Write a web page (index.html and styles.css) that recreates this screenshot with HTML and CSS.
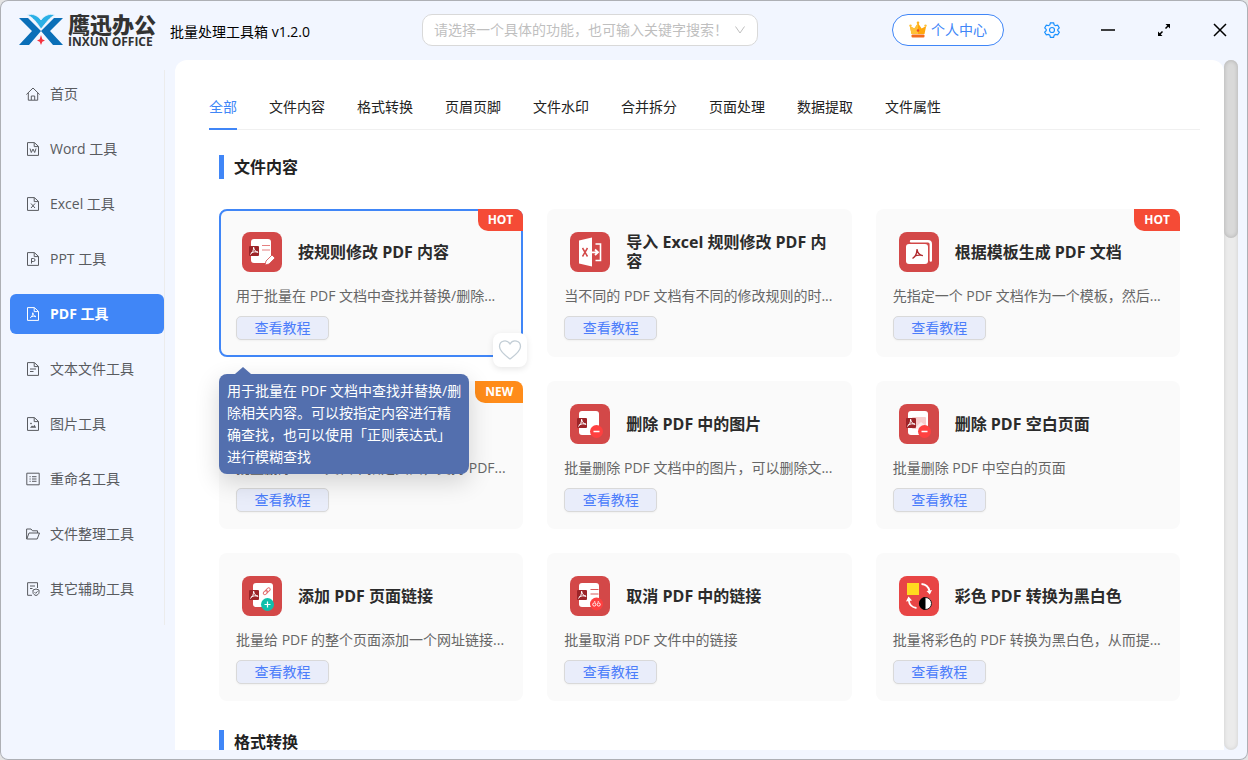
FILE: index.html
```html
<!DOCTYPE html>
<html lang="zh-CN">
<head>
  <meta charset="UTF-8">
  <meta name="viewport" content="width=device-width, initial-scale=1.0">
  <title>批量处理工具箱</title>
  <link rel="stylesheet" href="styles.css">
</head>
<body>

  <!-- Iconos compartidos -->
  <svg class="sprite" aria-hidden="true">
    <symbol id="file" viewBox="0 0 14 14">
      <path d="M1.5.6H8.4L12.5 4.400V13.4H1.5ZM8.2.8V4.600H12.300" />
    </symbol>
    <symbol id="pdf-mark" viewBox="0 0 10 10">
      <path d="M4.6 1.6C4.5 4.8 3.6 7 1.5 8.2M4.7 1.6C5 4 6.3 5.6 8.8 6.3M2.6 6.7C4.4 5.8 6.3 5.6 8.6 6" fill="none" stroke="currentColor" stroke-linecap="round" />
    </symbol>
    <symbol id="pdf-badge" viewBox="0 0 10 10">
      <rect width="10" height="10" rx="1" fill="#9c2428" />
      <use href="#pdf-mark" color="#fff" />
    </symbol>
    <symbol id="minus-dot" viewBox="0 0 14 14">
      <circle cx="7" cy="7" r="6.5" fill="#ff4040" />
      <path d="M4 7H10" stroke="#fff" stroke-width="1.4" />
    </symbol>
  </svg>

  <div class="app">
    <header class="topbar">
      <div class="logo">
        <svg class="logo-mark" viewBox="0 0 44 32">
          <path d="M0 4H9L22 17L10 31H0L13 17Z" fill="#0a6fb8" />
          <path d="M44 4H35L22 17L34 31H44L31 17Z" fill="#0a6fb8" />
          <path d="M8 1C14-1 19 2 22 6C25 2 30-1 36 1C31 3 27 9 22 15C18 9 14 3 8 1Z" fill="#2bb0e6" stroke="#f2f6ff" stroke-width=".8" />
          <path d="M22 21L23.300 25.200L26 26.500L23.300 27.800L22 31L20.700 27.800L18 26.500L20.700 25.200Z" fill="#f5333f" />
        </svg>
        <div class="logo-text">
          <strong>鹰迅办公</strong>
          <span>INXUN OFFICE</span>
        </div>
      </div>
      <h1>批量处理工具箱 v1.2.0</h1>

      <div class="search">
        <div class="search-box">
          <input type="text" placeholder="请选择一个具体的功能，也可输入关键字搜索！" aria-label="搜索功能">
          <svg class="chevron" viewBox="0 0 12 12"><path d="M1.5 2.5L6 9L10.500 2.500" /></svg>
        </div>
      </div>

      <button class="user" type="button">
        <svg class="crown" viewBox="0 0 18 18">
          <path d="M2.500 13L.8 5L5.400 7.500L9 2L12.600 7.500L17.200 5L15.500 13Z" fill="#ffa70a" />
          <path d="M2.500 13L.8 5L5.400 7.500L9 2V13Z" fill="#ffc037" />
          <circle cx="9" cy="1.800" r="1.300" fill="#ffb21c" />
          <circle cx="1.500" cy="4.600" r="1.200" fill="#ffc037" />
          <circle cx="16.500" cy="4.600" r="1.200" fill="#ffc037" />
          <circle cx="9" cy="9.500" r="1.200" fill="#e9452c" />
          <rect x="2.500" y="13.500" width="13" height="3" rx="1" fill="#f36b1c" />
        </svg>
        个人中心
      </button>

      <div class="window-buttons">
        <button class="gear" type="button" aria-label="设置">
          <svg viewBox="0 0 16 16">
            <path d="M6.400.8H9.600L10.200 2.900L11.600 3.700L13.700 3.200L15.300 5.900L13.800 7.400V8.700L15.300 10.200L13.700 12.900L11.600 12.400L10.200 13.200L9.600 15.300H6.400L5.800 13.200L4.400 12.400L2.300 12.900L.7 10.200L2.200 8.700V7.400L.7 5.900L2.300 3.200L4.400 3.700L5.800 2.900Z" />
            <circle cx="8" cy="8" r="2.500" />
          </svg>
        </button>
        <button type="button" aria-label="最小化">
          <svg viewBox="0 0 16 16"><path d="M1 8H15" /></svg>
        </button>
        <button type="button" aria-label="最大化">
          <svg viewBox="0 0 16 16">
            <path d="M9.500 6.500L13 3M6.500 9.500L3 13" />
            <path d="M9.500 2H14V6.500ZM2 9.500V14H6.500Z" fill="currentColor" stroke="none" />
          </svg>
        </button>
        <button type="button" aria-label="关闭">
          <svg viewBox="0 0 16 16"><path d="M2 2L14 14M14 2L2 14" /></svg>
        </button>
      </div>
    </header>

    <div class="body">
      <nav class="sidebar" aria-label="工具分类">
        <a href="#">
          <svg viewBox="0 0 14 14"><path d="M.4 7.500L7 1L13.600 7.500M2.300 6V13.200H11.700V6M5.300 13V9H8.700V13" /></svg>
          首页
        </a>
        <a href="#">
          <svg viewBox="0 0 14 14"><use href="#file" /><path d="M4 6.500L5.300 10.500L7 7L8.700 10.500L10 6.500" /></svg>
          Word 工具
        </a>
        <a href="#">
          <svg viewBox="0 0 14 14"><use href="#file" /><path d="M5 6.500L9 11M9 6.500L5 11" /></svg>
          Excel 工具
        </a>
        <a href="#">
          <svg viewBox="0 0 14 14"><use href="#file" /><path d="M5.500 11.500V6.500H7.500A1.500 1.500 0 0 1 7.500 9.500H5.500" /></svg>
          PPT 工具
        </a>
        <a href="#" class="active" aria-current="page">
          <svg viewBox="0 0 14 14"><use href="#file" /><path d="M6.800 5.500C6.800 8 6 9.800 4.200 10.800M6.900 6C7.200 8 8.300 9.300 10 9.900M5.200 9.700C6.500 9.200 8 9 9.800 9.300" /></svg>
          PDF 工具
        </a>
        <a href="#">
          <svg viewBox="0 0 14 14"><use href="#file" /><path d="M4 7H10M4 9.500H7.500" /></svg>
          文本文件工具
        </a>
        <a href="#">
          <svg viewBox="0 0 14 14"><use href="#file" /><path d="M4 10.800L6 8.500L7.200 9.500L8.500 7.800L10.200 10.800Z" fill="currentColor" stroke="none" /><circle cx="5" cy="6.500" r=".5" /></svg>
          图片工具
        </a>
        <a href="#">
          <svg viewBox="0 0 14 14"><path d="M.8 1.200H13.200V12.800H.8ZM6 4.700H10.500M6 7H10.500M6 9.300H10.500M3.500 4.700H4.700M3.500 7H4.700M3.500 9.300H4.700" /></svg>
          重命名工具
        </a>
        <a href="#">
          <svg viewBox="0 0 14 14"><path d="M.6 12V2H5L6.500 3.800H11.500V6M.6 12H11.200L13.500 6H3L.8 12" /></svg>
          文件整理工具
        </a>
        <a href="#">
          <svg viewBox="0 0 14 14"><path d="M6 13.300H1.600V.7H11.500V6M4 4H9M4 6.500H6.500M10 7L13 8V10.500C13 12 11.500 13 10 13.500C8.500 13 7 12 7 10.500V8ZM8.600 10.200L9.700 11.300L11.500 9.300" /></svg>
          其它辅助工具
        </a>
      </nav>

      <main class="panel">
        <div class="tabs" role="tablist">
          <button type="button" role="tab" class="active" aria-selected="true">全部</button>
          <button type="button" role="tab">文件内容</button>
          <button type="button" role="tab">格式转换</button>
          <button type="button" role="tab">页眉页脚</button>
          <button type="button" role="tab">文件水印</button>
          <button type="button" role="tab">合并拆分</button>
          <button type="button" role="tab">页面处理</button>
          <button type="button" role="tab">数据提取</button>
          <button type="button" role="tab">文件属性</button>
        </div>

        <section>
          <h2>文件内容</h2>
          <div class="cards">

            <article class="card selected">
              <span class="tag hot">HOT</span>
              <div class="card-head">
                <svg class="tool-icon" viewBox="0 0 40 40">
                  <rect x="9" y="7" width="20" height="24" rx="3" fill="#fff" />
                  <use href="#pdf-badge" x="7" y="14" width="10" height="10" />
                  <path d="M20 13.500H28M20 18H28" stroke="#e58080" stroke-width="1.200" />
                  <path d="M23 33L24 29L30 23L33 26L27 32Z" fill="#fff" stroke="#d34848" stroke-width=".8" />
                </svg>
                <h3>按规则修改 PDF 内容</h3>
              </div>
              <p>用于批量在 PDF 文档中查找并替换/删除...</p>
              <button class="guide" type="button">查看教程</button>
              <button class="fav" type="button" aria-label="收藏">
                <svg viewBox="0 0 24 24"><path d="M12 21C8 18 1.500 13.500 1.500 8.500C1.500 2.500 9 1 12 6C15 1 22.500 2.500 22.500 8.500C22.500 13.500 16 18 12 21Z" /></svg>
              </button>
              <div class="tooltip" role="tooltip">
                用于批量在 PDF 文档中查找并替换/删<br>除相关内容。可以按指定内容进行精<br>确查找，也可以使用「正则表达式」<br>进行模糊查找
              </div>
            </article>

            <article class="card">
              <div class="card-head">
                <svg class="tool-icon" viewBox="0 0 40 40">
                  <path d="M9 8.500L22 5.500V34.500L9 31.500Z" fill="#fff" />
                  <path d="M12.500 16L17.500 24.500M17.500 16L12.500 24.500" stroke="#d34848" stroke-width="1.500" />
                  <path d="M25.500 12H30.500V28.500H25.500" fill="none" stroke="#fff" stroke-width="1.600" />
                  <path d="M22 20.300H27M25 17.500L28 20.300L25 23" fill="none" stroke="#fff" stroke-width="1.800" />
                </svg>
                <h3>导入 Excel 规则修改 PDF 内容</h3>
              </div>
              <p>当不同的 PDF 文档有不同的修改规则的时...</p>
              <button class="guide" type="button">查看教程</button>
            </article>

            <article class="card">
              <span class="tag hot">HOT</span>
              <div class="card-head">
                <svg class="tool-icon" viewBox="0 0 40 40">
                  <path d="M12 9.200H29Q31.800 9.200 31.800 12V28.500" fill="none" stroke="#fff" stroke-width="2.400" stroke-linecap="round" />
                  <rect x="7" y="12" width="22" height="20" rx="3" fill="#fff" />
                  <use href="#pdf-mark" x="12" y="15.500" width="13" height="13" color="#b02a2e" />
                </svg>
                <h3>根据模板生成 PDF 文档</h3>
              </div>
              <p>先指定一个 PDF 文档作为一个模板，然后...</p>
              <button class="guide" type="button">查看教程</button>
            </article>

            <article class="card">
              <span class="tag new">NEW</span>
              <div class="card-head">
                <svg class="tool-icon" viewBox="0 0 40 40">
                  <rect x="9" y="7" width="20" height="24" rx="3" fill="#fff" />
                  <use href="#pdf-badge" x="7" y="14" width="10" height="10" />
                </svg>
                <h3>删除 PDF 页面</h3>
              </div>
              <p>批量删除 PDF 文档中指定页面，支持 PDF...</p>
              <button class="guide" type="button">查看教程</button>
            </article>

            <article class="card">
              <div class="card-head">
                <svg class="tool-icon" viewBox="0 0 40 40">
                  <rect x="9" y="7" width="20" height="24" rx="3" fill="#fff" />
                  <use href="#pdf-badge" x="7" y="14" width="10" height="10" />
                  <use href="#minus-dot" x="19.500" y="20.500" width="14" height="14" />
                </svg>
                <h3>删除 PDF 中的图片</h3>
              </div>
              <p>批量删除 PDF 文档中的图片，可以删除文...</p>
              <button class="guide" type="button">查看教程</button>
            </article>

            <article class="card">
              <div class="card-head">
                <svg class="tool-icon" viewBox="0 0 40 40">
                  <rect x="9" y="7" width="20" height="24" rx="3" fill="#fff" />
                  <rect x="13" y="13" width="14" height="12" rx="1" fill="#f8cccc" />
                  <path d="M17 23L22 18L27 22V25H17Z" fill="#fff" opacity=".6" />
                  <use href="#pdf-badge" x="7" y="14" width="10" height="10" />
                  <use href="#minus-dot" x="18.500" y="20.500" width="14" height="14" />
                </svg>
                <h3>删除 PDF 空白页面</h3>
              </div>
              <p>批量删除 PDF 中空白的页面</p>
              <button class="guide" type="button">查看教程</button>
            </article>

            <article class="card">
              <div class="card-head">
                <svg class="tool-icon" viewBox="0 0 40 40">
                  <rect x="11" y="7" width="20" height="24" rx="3" fill="#fff" />
                  <use href="#pdf-badge" x="7" y="14" width="10" height="10" />
                  <g fill="none" stroke="#e26a6a">
                    <rect x="21" y="15" width="5" height="3" rx="1.500" transform="rotate(-45 23.500 16.500)" />
                    <rect x="23.500" y="12.500" width="5" height="3" rx="1.500" transform="rotate(-45 26 14)" />
                  </g>
                  <circle cx="25.500" cy="28.500" r="6.500" fill="#0fbfab" />
                  <path d="M22.500 28.500H28.500M25.500 25.500V31.500" stroke="#fff" stroke-width="1.200" />
                </svg>
                <h3>添加 PDF 页面链接</h3>
              </div>
              <p>批量给 PDF 的整个页面添加一个网址链接...</p>
              <button class="guide" type="button">查看教程</button>
            </article>

            <article class="card">
              <div class="card-head">
                <svg class="tool-icon" viewBox="0 0 40 40">
                  <rect x="9" y="7" width="20" height="24" rx="3" fill="#fff" />
                  <use href="#pdf-badge" x="7" y="14" width="10" height="10" />
                  <path d="M20.500 13.500H28.500M20.500 18H28.500" stroke="#d95b5b" stroke-width="1.200" />
                  <circle cx="26.500" cy="28" r="6.500" fill="#ff4040" />
                  <g fill="none" stroke="#fff" stroke-width=".9">
                    <circle cx="24.300" cy="28.500" r="1.600" />
                    <circle cx="28.700" cy="28.500" r="1.600" />
                    <path d="M24.500 25L25.200 26.400M28.500 25L27.800 26.400" />
                  </g>
                </svg>
                <h3>取消 PDF 中的链接</h3>
              </div>
              <p>批量取消 PDF 文件中的链接</p>
              <button class="guide" type="button">查看教程</button>
            </article>

            <article class="card">
              <div class="card-head">
                <svg class="tool-icon bright" viewBox="0 0 40 40">
                  <rect x="8" y="7" width="12" height="12" fill="#ffd91f" />
                  <path d="M22.500 8Q29 8.500 30.500 15M17.500 32Q10.500 31 9.800 24.500" fill="none" stroke="#fff" stroke-width="1.800" />
                  <path d="M27.500 15L33 14L30.800 18.500ZM7 25.500L9.500 20.500L13 24.500Z" fill="#fff" />
                  <circle cx="26.500" cy="27.500" r="6" fill="#fff" stroke="#111" stroke-width=".9" />
                  <path d="M26.500 21A6.500 6.500 0 0 0 26.500 34Z" fill="#000" />
                </svg>
                <h3>彩色 PDF 转换为黑白色</h3>
              </div>
              <p>批量将彩色的 PDF 转换为黑白色，从而提...</p>
              <button class="guide" type="button">查看教程</button>
            </article>

          </div>
        </section>

        <section>
          <h2>格式转换</h2>
        </section>
      </main>

      <div class="scrollbar"><div class="thumb"></div></div>
    </div>
  </div>

</body>
</html>
```

FILE: styles.css
```css
* {
  box-sizing: border-box;
}

body {
  margin: 0;
  background: #e4e4e4;
  font-family: "Open Sans", "Noto Sans CJK SC", sans-serif;
  font-size: 14px;
  line-height: 22px;
  color: #333;
}

button,
input {
  font: inherit;
}

button {
  padding: 0;
  border: none;
  background: none;
  color: inherit;
  cursor: pointer;
}

h1,
h2,
h3,
p {
  margin: 0;
}

.sprite {
  position: absolute;
  width: 0;
  height: 0;
}

.app {
  display: flex;
  flex-direction: column;
  height: 100vh;
  border-radius: 8px;
  background: #f2f6ff;
  box-shadow: inset 0 0 0 1px #aeb0b5;
  overflow: hidden;
}

/* Barra superior */
.topbar {
  display: flex;
  flex: none;
  align-items: center;
  height: 60px;
  padding-left: 19px;
}

.logo {
  display: flex;
  align-items: center;
  gap: 5px;
}

.logo-mark {
  width: 44px;
  height: 32px;
}

.logo-text {
  display: flex;
  flex-direction: column;
  color: #333;
  white-space: nowrap;
}

.logo-text strong {
  font-size: 22px;
  font-weight: 900;
  line-height: 24px;
}

.logo-text span {
  font-size: 12px;
  font-weight: 700;
  line-height: 12px;
}

.topbar h1 {
  margin-left: 14px;
  padding-top: 4px;
  font-size: 14px;
  font-weight: 400;
  color: #000;
  white-space: nowrap;
}

.search {
  display: flex;
  flex: 1;
  justify-content: center;
  padding-right: 22px;
}

.search-box {
  display: flex;
  align-items: center;
  width: 336px;
  height: 32px;
  padding: 0 11px;
  border: 1px solid #d9d9d9;
  border-radius: 10px;
  background: #fff;
}

.search-box input {
  flex: 1;
  min-width: 0;
  padding: 0;
  border: none;
  outline: none;
  background: none;
}

.search-box input::placeholder {
  color: #bfbfbf;
}

.chevron {
  width: 12px;
  height: 12px;
  fill: none;
  stroke: #bfbfbf;
}

.user {
  display: flex;
  align-items: center;
  justify-content: center;
  gap: 4px;
  width: 112px;
  height: 32px;
  margin-right: 20px;
  border: 1px solid #4086f7;
  border-radius: 16px;
  background: #fff;
  color: #4086f7;
}

.crown {
  width: 18px;
  height: 18px;
}

.window-buttons {
  display: flex;
}

.window-buttons button {
  display: flex;
  align-items: center;
  justify-content: center;
  width: 56px;
  height: 40px;
  color: #000;
}

.window-buttons svg {
  width: 16px;
  height: 16px;
  fill: none;
  stroke: currentColor;
  stroke-width: 1.5;
}

.window-buttons .gear {
  color: #1890ff;
}

.gear svg {
  stroke-width: 1.2;
}

/* Menú lateral */
.body {
  display: flex;
  flex: 1;
  min-height: 0;
  padding: 0 10px 10px;
}

.sidebar {
  display: flex;
  flex: none;
  flex-direction: column;
  align-self: flex-start;
  gap: 15px;
  width: 155px;
  margin: 10px 10px 0 0;
  padding: 4px 0 16px;
  border-right: 1px solid #ececec;
}

.sidebar a {
  display: flex;
  align-items: center;
  gap: 10px;
  height: 40px;
  padding-left: 16px;
  border-radius: 6px;
  color: #595b60;
  text-decoration: none;
}

.sidebar a.active {
  background: #4086f7;
  color: #fff;
  font-weight: 700;
}

.sidebar svg {
  width: 14px;
  height: 14px;
  fill: none;
  stroke: currentColor;
}

/* Contenido */
.panel {
  flex: 1;
  min-width: 0;
  padding: 24px 24px 0 34px;
  border-radius: 12px 12px 0 0;
  background: #fff;
  overflow: hidden;
}

.tabs {
  display: flex;
  gap: 32px;
  border-bottom: 1px solid #f0f0f0;
}

.tabs button {
  height: 46px;
  margin-bottom: -1px;
  padding-top: 2px;
  border-bottom: 2px solid transparent;
  color: #222;
}

.tabs button.active {
  border-color: #4086f7;
  color: #4086f7;
}

section {
  padding: 25px 20px 4px 10px;
}

h2 {
  padding-left: 10px;
  border-left: 5px solid #4086f7;
  font-size: 16px;
  font-weight: 700;
  line-height: 24px;
  color: #222;
}

.cards {
  display: grid;
  grid-template-columns: repeat(3, 1fr);
  gap: 24px;
  margin-top: 30px;
}

.card {
  position: relative;
  min-width: 0;
  padding: 15px;
  border: 2px solid transparent;
  border-radius: 8px;
  background: #fafafa;
}

.card.selected {
  z-index: 1;
  border-color: #4086f7;
}

.card-head {
  display: flex;
  align-items: center;
  gap: 16px;
  padding: 6px;
}

.tool-icon {
  flex: none;
  width: 40px;
  height: 40px;
  border-radius: 8px;
  background: #d34848;
}

.tool-icon.bright {
  background: #e84545;
}

h3 {
  font-size: 16px;
  font-weight: 700;
  line-height: 19px;
  color: #2b2b2b;
}

.card p {
  margin-top: 7px;
  color: #666;
  white-space: nowrap;
}

.guide {
  display: block;
  width: 93px;
  height: 24px;
  margin-top: 9px;
  border: 1px solid #d9d9d9;
  border-radius: 5px;
  background: #e9edfa;
  box-shadow: 0 1px 2px rgba(0, 0, 0, 0.04);
  color: #4c7dfa;
  line-height: 20px;
}

.tag {
  position: absolute;
  top: -2px;
  right: -2px;
  padding: 0 10px;
  border-radius: 0 8px 0 10px;
  color: #fff;
  font-size: 12px;
  font-weight: 700;
}

.hot {
  background: #f54b36;
}

.new {
  background: #ff8c1a;
}

.fav {
  position: absolute;
  right: -6px;
  bottom: -12px;
  display: flex;
  align-items: center;
  justify-content: center;
  width: 34px;
  height: 34px;
  border-radius: 8px;
  background: #fff;
  box-shadow: 0 2px 6px rgba(0, 0, 0, 0.1);
}

.fav svg {
  width: 24px;
  height: 24px;
  fill: none;
  stroke: #c3ced6;
  stroke-width: 1.3;
}

.tooltip {
  position: absolute;
  top: 163px;
  left: -2px;
  width: 250px;
  padding: 6px 8px;
  border-radius: 8px;
  background: #536fae;
  box-shadow: 0 8px 24px rgba(0, 0, 0, 0.16);
  color: #fff;
  white-space: nowrap;
}

.tooltip::before {
  content: "";
  position: absolute;
  top: -7px;
  left: 16px;
  border: 8px solid transparent;
  border-top: none;
  border-bottom: 7px solid #536fae;
}

.scrollbar {
  flex: none;
  width: 14px;
  border-radius: 7px;
  background: #ebebeb;
  box-shadow: inset 0 0 4px rgba(0, 0, 0, 0.12);
}

.thumb {
  height: 178px;
  border-radius: 7px;
  background: #d9d9d9;
  box-shadow: inset 0 0 4px rgba(0, 0, 0, 0.2);
}
```
